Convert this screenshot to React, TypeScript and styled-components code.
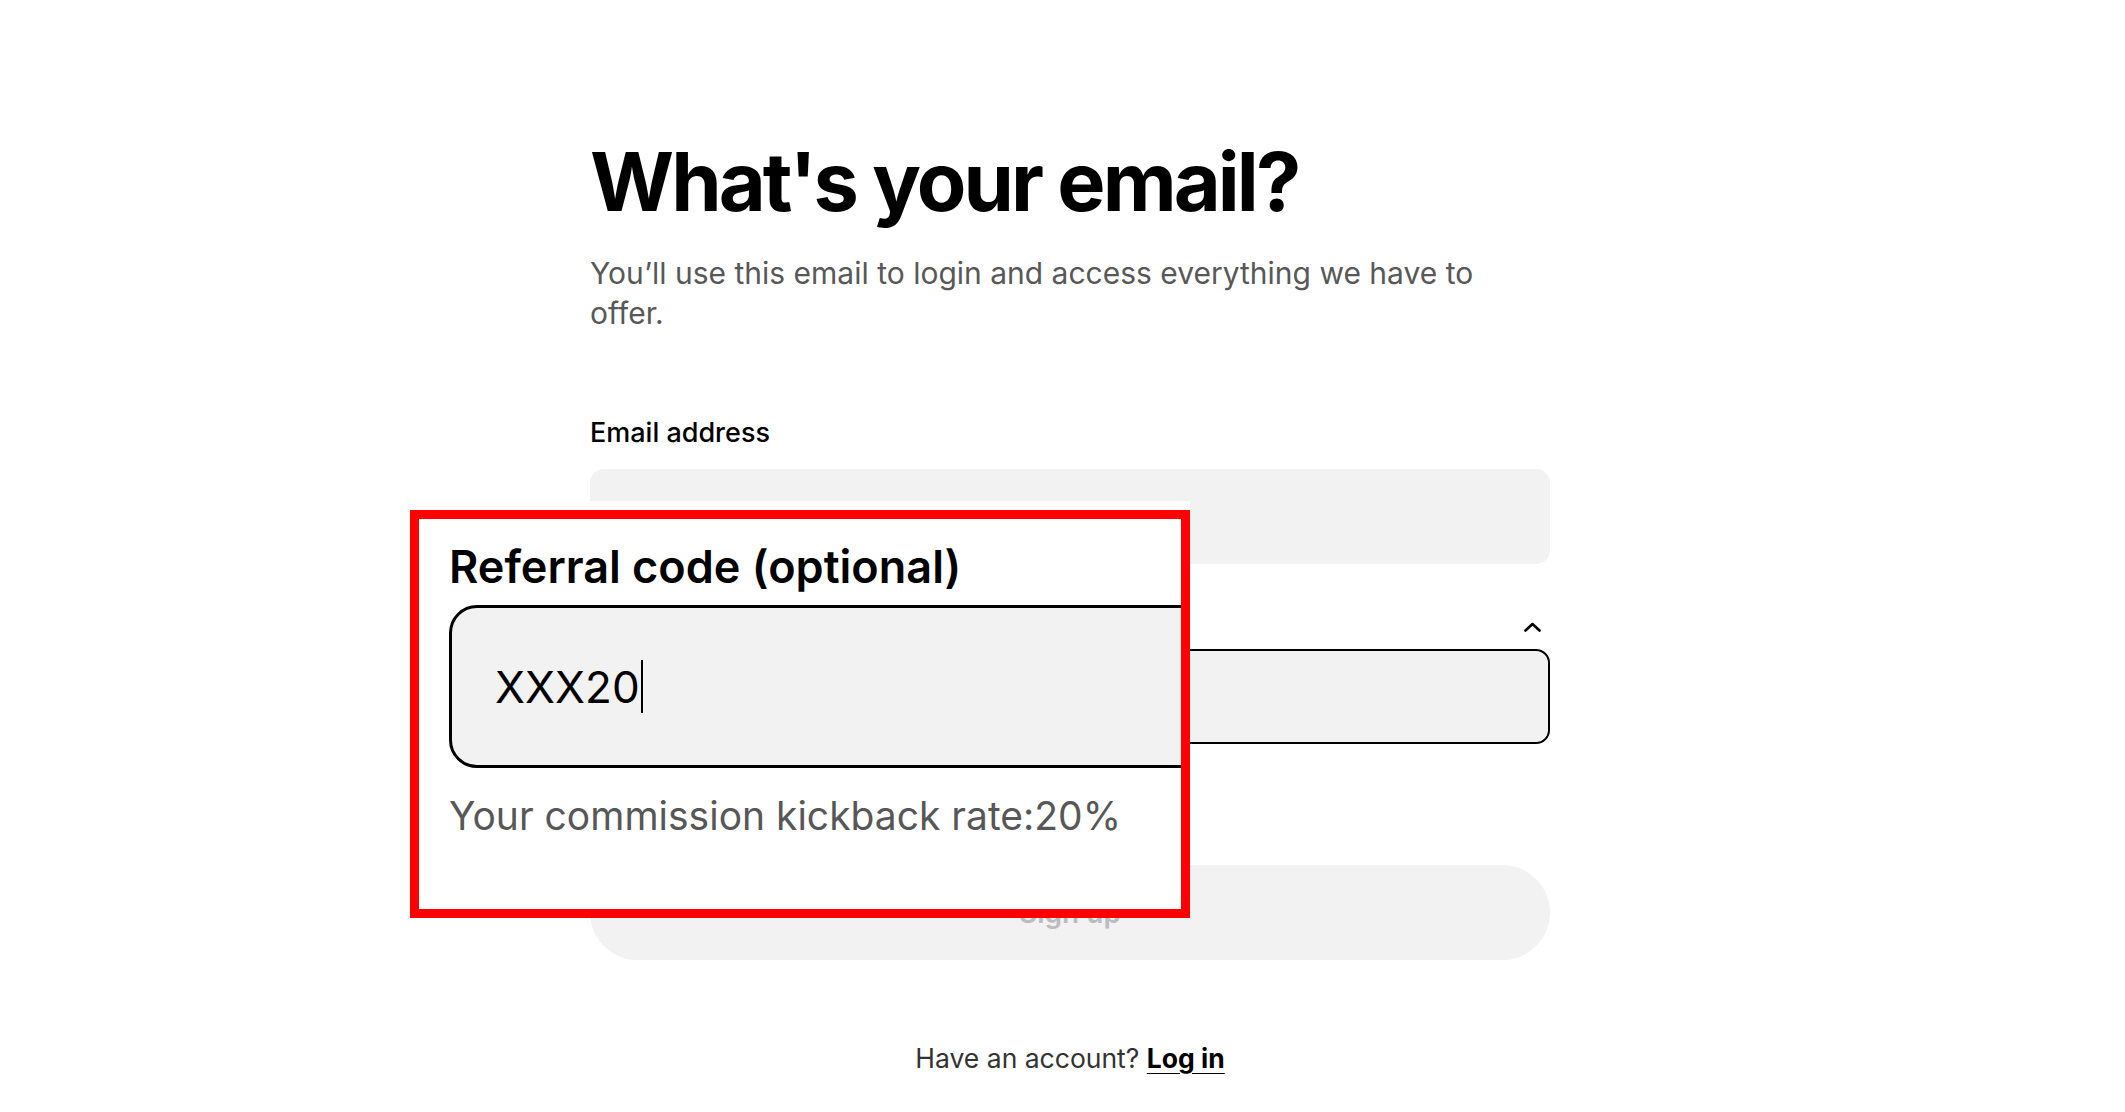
import React from "react";
import styled, { createGlobalStyle } from "styled-components";

const GlobalStyle = createGlobalStyle`
  html, body {
    margin: 0;
    padding: 0;
    background: #fff;
  }
  body {
    font-family: Inter, "Noto Sans", sans-serif;
    color: #000;
  }
  * {
    box-sizing: border-box;
  }
`;

const Page = styled.main`
  display: flex;
  justify-content: center;
  padding: 142px 0 0 15px;
`;

const Form = styled.section`
  position: relative;
  width: 960px;
  display: flex;
  flex-direction: column;
`;

const Title = styled.h1`
  margin: 0;
  font-size: 81px;
  line-height: 81px;
  font-weight: 700;
  letter-spacing: -2.9px;
`;

const Lead = styled.p`
  margin: 30px 0 0;
  font-size: 30px;
  line-height: 40px;
  color: #585858;
`;

const FieldLabel = styled.label<{ $gap?: number }>`
  display: block;
  margin-top: ${(p) => p.$gap ?? 0}px;
  font-size: 27px;
  line-height: 32px;
  font-weight: 500;
`;

const TextBox = styled.input<{ $focused?: boolean; $gap: number }>`
  display: block;
  width: 100%;
  height: 95px;
  margin-top: ${(p) => p.$gap}px;
  padding: 0 28px;
  border: ${(p) => (p.$focused ? "2px solid #000" : "none")};
  border-radius: 14px;
  background: #f2f2f2;
  font: inherit;
  font-size: 27px;
  outline: none;
`;

const SectionHead = styled.div`
  display: flex;
  align-items: center;
  justify-content: space-between;
  margin-top: 47px;
  padding-right: 9px;
`;

const Hint = styled.p`
  margin: 14px 0 0;
  font-size: 21px;
  line-height: 28px;
  color: #5a5a5a;
`;

const SubmitButton = styled.button`
  height: 95px;
  margin-top: 79px;
  border: none;
  border-radius: 48px;
  background: #f2f2f2;
  color: #bcbcbc;
  font-family: inherit;
  font-size: 28px;
  font-weight: 600;
`;

const Footer = styled.p`
  margin: 82px 0 0;
  text-align: center;
  font-size: 26.5px;
  line-height: 32px;
  color: #333;
`;

const LoginLink = styled.a`
  color: #000;
  font-weight: 700;
  text-decoration: underline;
  text-decoration-thickness: 2px;
  text-underline-offset: 5px;
`;

/* zoomed callout pasted over the form */
const Callout = styled.div`
  position: absolute;
  left: -180px;
  top: 359px;
  width: 780px;
  padding-top: 9px;
  background: #fff;
`;

const RedFrame = styled.div`
  height: 408px;
  border: 9px solid #ff0000;
  overflow: hidden;
  padding: 21px 0 0 30px;
  background: #fff;
`;

const CalloutLabel = styled.div`
  font-size: 45px;
  line-height: 54px;
  font-weight: 600;
`;

const CalloutInput = styled.div`
  display: flex;
  align-items: center;
  width: 900px;
  height: 163px;
  margin-top: 11px;
  padding-left: 43px;
  border: 3px solid #000;
  border-radius: 28px;
  background: #f2f2f2;
  font-size: 44px;
`;

const Caret = styled.span`
  width: 2px;
  height: 53px;
  margin-left: 1px;
  background: #000;
`;

const CalloutHint = styled.div`
  margin-top: 26px;
  font-size: 39px;
  line-height: 44px;
  color: #575757;
`;

const Chevron = () => (
  <svg width="17" height="10" viewBox="0 0 17 10" fill="none">
    <polyline
      points="1.5,8.5 8.5,2 15.5,8.5"
      stroke="#000"
      strokeWidth="2.6"
      strokeLinecap="round"
      strokeLinejoin="round"
    />
  </svg>
);

export default function App() {
  return (
    <>
      <GlobalStyle />
      <Page>
        <Form>
          <Title>What's your email?</Title>
          <Lead>You’ll use this email to login and access everything we have to offer.</Lead>

          <FieldLabel $gap={84} htmlFor="email">Email address</FieldLabel>
          <TextBox id="email" type="email" $gap={20} readOnly />

          <SectionHead>
            <FieldLabel htmlFor="ref">Referral code (optional)</FieldLabel>
            <Chevron />
          </SectionHead>
          <TextBox id="ref" $focused $gap={6} defaultValue="XXX20" readOnly />
          <Hint>Your commission kickback rate:20%</Hint>

          <SubmitButton type="button" disabled>Sign up</SubmitButton>

          <Footer>
            Have an account? <LoginLink href="#">Log in</LoginLink>
          </Footer>

          <Callout>
            <RedFrame>
              <CalloutLabel>Referral code (optional)</CalloutLabel>
              <CalloutInput>
                XXX20
                <Caret />
              </CalloutInput>
              <CalloutHint>Your commission kickback rate:20%</CalloutHint>
            </RedFrame>
          </Callout>
        </Form>
      </Page>
    </>
  );
}
